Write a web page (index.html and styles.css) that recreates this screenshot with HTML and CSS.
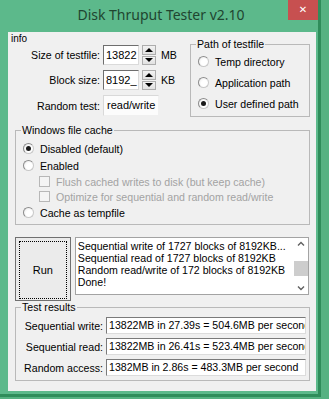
FILE: index.html
```html
<!DOCTYPE html>
<html lang="en">
<head>
<meta charset="UTF-8">
<title>Disk Thruput Tester v2.10</title>
<link rel="stylesheet" href="styles.css">
</head>
<body>
    <div class="window">
        <div class="titlebar">
            <h1 class="title">Disk Thruput Tester v2.10</h1>
            <button class="close-btn">&#x2715;</button>
        </div>

        <div class="client">
            <div class="top">
                <div class="params">
                    <div class="info">info</div>
                    <div class="param-grid">
                        <label>Size of testfile:</label>
                        <div class="edit">13822</div>
                        <div class="spin"><span class="up"></span><span class="down"></span></div>
                        <span class="unit">MB</span>

                        <label>Block size:</label>
                        <div class="edit">8192_</div>
                        <div class="spin"><span class="up"></span><span class="down"></span></div>
                        <span class="unit">KB</span>

                        <label>Random test:</label>
                        <div class="edit readonly">read/write</div>
                    </div>
                </div>

                <fieldset class="group path-group">
                    <legend>Path of testfile</legend>
                    <div class="opt"><span class="radio"></span>Temp directory</div>
                    <div class="opt"><span class="radio"></span>Application path</div>
                    <div class="opt"><span class="radio checked"></span>User defined path</div>
                </fieldset>
            </div>

            <fieldset class="group cache-group">
                <legend>Windows file cache</legend>
                <div class="opt"><span class="radio checked"></span>Disabled (default)</div>
                <div class="opt"><span class="radio"></span>Enabled</div>
                <div class="opt sub disabled"><span class="check"></span>Flush cached writes to disk (but keep cache)</div>
                <div class="opt sub disabled"><span class="check"></span>Optimize for sequential and random read/write</div>
                <div class="opt"><span class="radio"></span>Cache as tempfile</div>
            </fieldset>

            <div class="run-row">
                <button class="run-btn"><span>Run</span></button>
                <div class="log">
                    <div class="log-text">
                        <div>Sequential write of 1727 blocks of 8192KB...</div>
                        <div>Sequential read of 1727 blocks of 8192KB</div>
                        <div>Random read/write of 172 blocks of 8192KB</div>
                        <div>Done!</div>
                    </div>
                    <div class="scrollbar">
                        <svg class="arrow" width="14" height="12" viewBox="0 0 14 12"><path d="M4 7.5 L7 4.5 L10 7.5" fill="none" stroke="#606060" stroke-width="1.4"/></svg>
                        <div class="track"><div class="thumb"></div></div>
                        <svg class="arrow" width="14" height="12" viewBox="0 0 14 12"><path d="M4 4.5 L7 7.5 L10 4.5" fill="none" stroke="#606060" stroke-width="1.4"/></svg>
                    </div>
                </div>
            </div>

            <fieldset class="group results-group">
                <legend>Test results</legend>
                <div class="result-grid">
                    <label>Sequential write:</label>
                    <div class="result">13822MB in 27.39s = 504.6MB per second</div>
                    <label>Sequential read:</label>
                    <div class="result">13822MB in 26.41s = 523.4MB per second</div>
                    <label>Random access:</label>
                    <div class="result">1382MB in 2.86s = 483.3MB per second</div>
                </div>
            </fieldset>
        </div>
    </div>
</body>
</html>
```

FILE: styles.css
```css
body {
    margin: 0;
    width: 329px;
    height: 399px;
    overflow: hidden;
    background-color: #56b282;
    font-family: "Liberation Sans", Arial, sans-serif;
    font-size: 10.6px;
    color: #000;
}

.window {
    width: 318px;
    height: 394px;
    background-color: #5cb98b;
    border-right: 3px solid #2f8d5b;
    border-bottom: 3px solid #2f8d5b;
    display: flex;
    flex-direction: column;
}

.titlebar {
    height: 32px;
    display: grid;
    grid-template-columns: 1fr auto 1fr;
    align-items: start;
    padding-left: 4px;
}

.title {
    grid-column: 2;
    margin: 0;
    font-family: "Noto Sans", sans-serif;
    font-size: 14px;
    font-weight: normal;
    line-height: 30px;
    color: #1f4530;
}

.close-btn {
    grid-column: 3;
    justify-self: end;
    width: 30px;
    height: 20px;
    padding: 0;
    border: none;
    background-color: #c75050;
    color: #fff;
    font-family: "DejaVu Sans", sans-serif;
    font-size: 10px;
    font-weight: bold;
    line-height: 20px;
}

.client {
    flex: 1;
    margin: 0 2px 3px 8px;
    background-color: #f0f0f0;
}

/* top part */

.top {
    display: flex;
    align-items: flex-start;
    height: 85px;
}

.info {
    height: 13px;
    padding-left: 3px;
    font-size: 10px;
    line-height: 13px;
}

.param-grid {
    display: grid;
    grid-template-columns: 92px 36px 14px 24px;
    grid-template-rows: 20px 20px 21px;
    column-gap: 3px;
    row-gap: 5px;
    align-items: center;
}

.param-grid label {
    text-align: right;
}

.edit {
    box-sizing: border-box;
    height: 100%;
    padding: 0 2px;
    border: 1px solid;
    border-color: #6e6e6e #dadada #dadada #6e6e6e;
    background-color: #fff;
    font-size: 11px;
    line-height: 18px;
    white-space: nowrap;
}

.edit.readonly {
    grid-column: 2 / 5;
    width: 56px;
    border-color: #d9d9d9 #f0f0f0 #f0f0f0 #d9d9d9;
    background-color: #fcfcfc;
    padding-left: 3px;
}

.spin {
    box-sizing: border-box;
    height: 100%;
    display: flex;
    flex-direction: column;
    gap: 1px;
}

.spin span {
    flex: 1;
    display: flex;
    align-items: center;
    justify-content: center;
    border: 1px solid #adadad;
    background: linear-gradient(#f2f2f2, #e1e1e1);
}

.spin .up::before,
.spin .down::before {
    content: "";
    border-left: 4px solid transparent;
    border-right: 4px solid transparent;
}

.spin .up::before {
    border-bottom: 4px solid #000;
}

.spin .down::before {
    border-top: 4px solid #000;
}

.unit {
    padding-left: 2px;
}

/* group boxes */

.group {
    margin: 0;
    padding: 0 0 0 7px;
    border: 1px solid #b9b9b9;
    min-width: 0;
}

.group legend {
    margin-left: -2px;
    padding: 0 1px;
    line-height: 13px;
}

.opt {
    display: flex;
    align-items: center;
    gap: 6px;
    white-space: nowrap;
}

.radio {
    box-sizing: border-box;
    width: 11px;
    height: 11px;
    border-radius: 50%;
    border: 1px solid #8c8c8c;
    border-right-color: #c8c8c8;
    border-bottom-color: #c8c8c8;
    background: radial-gradient(circle at 60% 60%, #ffffff 40%, #e4e4e4 100%);
    display: flex;
    align-items: center;
    justify-content: center;
}

.radio.checked::after {
    content: "";
    width: 5px;
    height: 5px;
    border-radius: 50%;
    background-color: #1b1b1b;
}

.check {
    box-sizing: border-box;
    width: 11px;
    height: 11px;
    border: 1px solid #b7b7b7;
    background-color: #f4f4f4;
}

.opt.disabled {
    color: #a3a3a3;
}

.opt.sub {
    margin-left: 16px;
}

.path-group {
    width: 120px;
    box-sizing: border-box;
    margin: 6px 6px 0 auto;
    padding-bottom: 2px;
}

.path-group .opt {
    height: 21px;
}

.cache-group {
    margin: 7px 6px 0 7px;
    padding-top: 3px;
    padding-bottom: 3px;
}

.cache-group .opt {
    height: 17px;
}

.cache-group .opt.sub {
    height: 15px;
}

/* run + log */

.run-row {
    display: flex;
    align-items: flex-start;
    gap: 4px;
    margin: 12px 7px 0 7px;
}

.run-btn {
    box-sizing: border-box;
    width: 56px;
    height: 64px;
    padding: 3px;
    border: 1px solid #707070;
    background-color: #ebebeb;
    font-family: inherit;
    font-size: 11px;
}

.run-btn span {
    display: flex;
    align-items: center;
    justify-content: center;
    height: 100%;
    border: 1px dotted #000;
}

.log {
    box-sizing: border-box;
    width: 235px;
    height: 58px;
    border: 1px solid #a3a3a3;
    background-color: #fff;
    display: flex;
}

.log-text {
    flex: 1;
    padding: 2px 0 0 2px;
    line-height: 12px;
    white-space: nowrap;
    overflow: hidden;
}

.scrollbar {
    width: 14px;
    display: flex;
    flex-direction: column;
    background-color: #fff;
}

.scrollbar .arrow {
    display: block;
}

.track {
    flex: 1;
    padding-top: 11px;
}

.thumb {
    height: 15px;
    background-color: #cdcdcd;
}

/* results */

.results-group {
    margin: 0 6px 0 7px;
    padding: 3px 3px 4px 0;
}

.results-group legend {
    margin-left: 5px;
}

.result-grid {
    display: grid;
    grid-template-columns: 87px 200px;
    grid-auto-rows: 17px;
    column-gap: 3px;
    row-gap: 4px;
    align-items: center;
}

.result-grid label {
    text-align: right;
    white-space: nowrap;
}

.result {
    box-sizing: border-box;
    height: 100%;
    padding-left: 2px;
    border: 1px solid;
    border-color: #7a7a7a #dcdcdc #dcdcdc #7a7a7a;
    background-color: #fff;
    line-height: 15px;
    white-space: nowrap;
    overflow: hidden;
}
```
